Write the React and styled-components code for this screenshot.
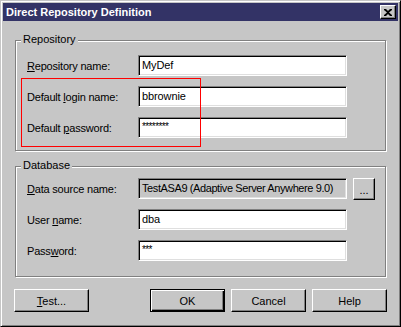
import React from "react";
import styled, { createGlobalStyle } from "styled-components";

const FACE = "#c6c6c6";

const GlobalStyle = createGlobalStyle`
  html, body { margin: 0; padding: 0; background: ${FACE}; }
  *, *::before, *::after { box-sizing: border-box; }
`;

const Window = styled.div`
  width: 401px;
  height: 327px;
  background: ${FACE};
  border: 1px solid;
  border-color: ${FACE} #000 #000 ${FACE};
  box-shadow: inset 1px 1px 0 #fff, inset -1px -1px 0 #808080;
  padding: 2px;
  display: flex;
  flex-direction: column;
  font-family: "Liberation Sans", Arial, sans-serif;
  font-size: 11px;
  color: #000;
`;

const TitleBar = styled.div`
  height: 18px;
  background: #333366;
  display: flex;
  align-items: center;
  justify-content: space-between;
  padding: 0 2px 0 3px;
`;

const Title = styled.span`
  color: #fff;
  font-weight: bold;
  font-size: 11px;
  line-height: 13px;
`;

const CloseButton = styled.div`
  width: 16px;
  height: 14px;
  background: ${FACE};
  border: 1px solid;
  border-color: #fff #000 #000 #fff;
  box-shadow: inset -1px -1px 0 #808080;
  display: flex;
  align-items: center;
  justify-content: center;
`;

const Content = styled.div`
  padding: 19px 12px 0 12px;
  display: flex;
  flex-direction: column;
`;

const Group = styled.div`
  position: relative;
  border: 1px solid #808080;
  box-shadow: inset 1px 1px 0 #fff, 1px 1px 0 #fff;
  padding: ${(p) => p.$pad};
  margin-top: ${(p) => p.$mt || 0}px;
  display: flex;
  flex-direction: column;
  gap: 10px;
`;

const Legend = styled.span`
  position: absolute;
  top: -8px;
  left: 5px;
  padding: 0 2px;
  background: ${FACE};
  line-height: 13px;
`;

const Highlight = styled.div`
  position: absolute;
  left: 5px;
  top: 37px;
  width: 180px;
  height: 69px;
  border: 1px solid #ff0000;
  pointer-events: none;
`;

const Row = styled.div`
  display: flex;
  align-items: center;
  height: 21px;
`;

const Label = styled.span`
  width: 111px;
  flex: none;
  letter-spacing: -0.2px;
`;

const Field = styled.div`
  width: 209px;
  height: 21px;
  flex: none;
  background: ${(p) => (p.$disabled ? FACE : "#fff")};
  border: 1px solid;
  border-color: #808080 #fff #fff #808080;
  box-shadow: inset 1px 1px 0 #000, inset -1px -1px 0 #dfdfdf;
  padding: ${(p) => (p.$masked ? "2px 0 0 3px" : "0 0 0 3px")};
  display: flex;
  align-items: ${(p) => (p.$masked ? "flex-start" : "center")};
  white-space: nowrap;
  overflow: hidden;
  font-size: ${(p) => (p.$masked ? "10px" : "11px")};
  letter-spacing: ${(p) => (p.$masked ? "-0.6px" : p.$disabled ? "-0.4px" : "-0.1px")};
  line-height: 13px;
`;

const SmallButton = styled.div`
  margin-left: 6px;
  width: 22px;
  height: 22px;
  background: ${FACE};
  border: 1px solid;
  border-color: #fff #000 #000 #fff;
  box-shadow: inset -1px -1px 0 #808080;
  display: flex;
  align-items: center;
  justify-content: center;
  padding-top: 2px;
`;

const ButtonRow = styled.div`
  margin: 12px -1px 0 -1px;
  display: flex;
  gap: 6px;
`;

const Spacer = styled.div`
  flex: 1;
`;

const Button = styled.div`
  width: 75px;
  height: 23px;
  background: ${FACE};
  border: 1px solid;
  border-color: ${(p) => (p.$default ? "#000" : "#fff #000 #000 #fff")};
  box-shadow: ${(p) =>
    p.$default
      ? "inset 1px 1px 0 #fff, inset -1px -1px 0 #000, inset -2px -2px 0 #808080"
      : "inset -1px -1px 0 #808080"};
  display: flex;
  align-items: center;
  justify-content: center;
`;

const fieldsRepo = [
  { label: <><u>R</u>epository name:</>, value: "MyDef" },
  { label: <>Default <u>l</u>ogin name:</>, value: "bbrownie" },
  { label: <>Default <u>p</u>assword:</>, value: "********", masked: true },
];

export default function App() {
  return (
    <>
      <GlobalStyle />
      <Window>
        <TitleBar>
          <Title>Direct Repository Definition</Title>
          <CloseButton>
            <svg width="8" height="7" viewBox="0 0 8 7">
              <path d="M0 0h2l2 2 2-2h2v1L5 3.5 8 6v1H6L4 5 2 7H0V6l3-2.5L0 1z" fill="#000" />
            </svg>
          </CloseButton>
        </TitleBar>
        <Content>
          <Group $pad="14px 0 12px 11px">
            <Legend>Repository</Legend>
            {fieldsRepo.map((f, i) => (
              <Row key={i}>
                <Label>{f.label}</Label>
                <Field $masked={f.masked}>{f.value}</Field>
              </Row>
            ))}
            <Highlight />
          </Group>
          <Group $pad="11px 0 15px 11px" $mt={15}>
            <Legend>Database</Legend>
            <Row>
              <Label><u>D</u>ata source name:</Label>
              <Field $disabled>TestASA9 (Adaptive Server Anywhere 9.0)</Field>
              <SmallButton>...</SmallButton>
            </Row>
            <Row>
              <Label>User <u>n</u>ame:</Label>
              <Field>dba</Field>
            </Row>
            <Row>
              <Label>Pass<u>w</u>ord:</Label>
              <Field $masked>***</Field>
            </Row>
          </Group>
          <ButtonRow>
            <Button><span><u>T</u>est...</span></Button>
            <Spacer />
            <Button $default>OK</Button>
            <Button>Cancel</Button>
            <Button>Help</Button>
          </ButtonRow>
        </Content>
      </Window>
    </>
  );
}
